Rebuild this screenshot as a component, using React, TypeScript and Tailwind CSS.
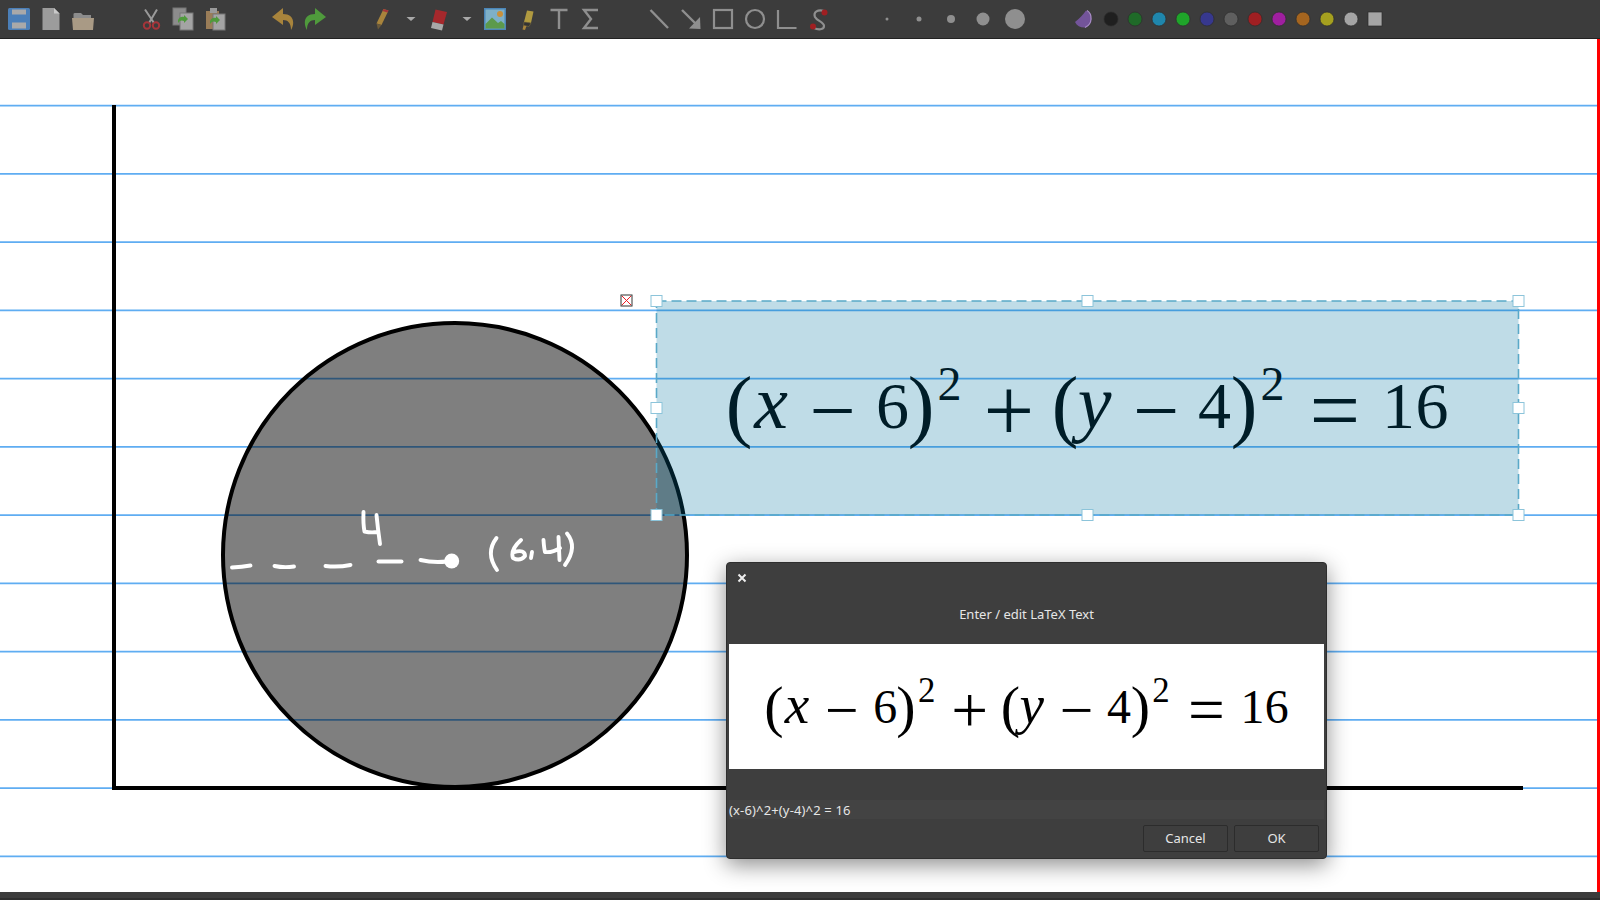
import type { ReactNode } from 'react'

const LINE_COUNT = 12
const lines = Array.from({ length: LINE_COUNT }, (_, i) => 105.7 + i * 68.25)

const COLORS = ['#1f1f1f', '#1f6a28', '#1f86ac', '#1fa52a', '#37388e', '#5f5f5f', '#a01f22', '#a01fa0', '#a5651f', '#a5a01f', '#a5a5a5']
const SIZES = [1.5, 2.5, 4, 6.5, 10]

// glyph centres in canvas coordinates; the dialog preview reuses them through its viewBox
const GLYPHS: { c: string; x: number; y: number; size: number; italic?: boolean }[] = [
  { c: '(', x: 739, y: 432, size: 80 },
  { c: 'x', x: 771, y: 428, size: 76, italic: true },
  { c: '−', x: 832.5, y: 438, size: 82 },
  { c: '6', x: 892.5, y: 428, size: 66 },
  { c: ')', x: 921, y: 432, size: 80 },
  { c: '2', x: 949.5, y: 400, size: 48 },
  { c: '+', x: 1009, y: 441, size: 90 },
  { c: '(', x: 1065, y: 432, size: 80 },
  { c: 'y', x: 1094.5, y: 428, size: 76, italic: true },
  { c: '−', x: 1156, y: 438, size: 82 },
  { c: '4', x: 1214.5, y: 428, size: 66 },
  { c: ')', x: 1244, y: 432, size: 80 },
  { c: '2', x: 1272.5, y: 400, size: 48 },
  { c: '=', x: 1335, y: 441, size: 90 },
  { c: '1', x: 1398.5, y: 428, size: 66 },
  { c: '6', x: 1432, y: 428, size: 66 },
]

function Formula() {
  return (
    <g className="font-['Liberation_Serif',serif]" fill="#000" textAnchor="middle">
      {GLYPHS.map((g, i) => (
        <text key={i} x={g.x} y={g.y} fontSize={g.size} fontStyle={g.italic ? 'italic' : 'normal'}>{g.c}</text>
      ))}
    </g>
  )
}

function Tool({ children, narrow }: { children: ReactNode; narrow?: boolean }) {
  return (
    <div className={`flex h-[38px] items-center justify-center ${narrow ? 'w-6' : 'w-8'}`}>
      <svg width="24" height="24" viewBox="0 0 24 24">{children}</svg>
    </div>
  )
}

const Drop = () => <Tool narrow><path d="M7.5 10 H16.5 L12 14 Z" fill="#a9a9a9" /></Tool>
const G = '#8f8f8f'

function GreenArrow({ x = 0, y = 0 }: { x?: number; y?: number }) {
  return <path transform={`translate(${x} ${y})`} d="M0 4 C1 1 4 0 6 1 V-1 L10 3 L6 7 V5 C4 4 2 4 0 7 Z" fill="#4f9a3c" />
}

function Toolbar() {
  return (
    <div className="flex h-[39px] gap-9 border-b border-[#222222] bg-[#3c3c3c] pl-[3px]">
      <div className="flex">
        <Tool>
          <path d="M1 2.5 Q1 1 2.5 1 H21.5 Q23 1 23 2.5 V21.5 Q23 23 21.5 23 H2.5 Q1 23 1 21.5 Z" fill="#4b7fb8" />
          <rect x="5" y="2.5" width="14" height="5" fill="#a9a9a9" />
          <rect x="5" y="15.5" width="14" height="6" fill="#a9a9a9" />
        </Tool>
        <Tool>
          <path d="M3.5 1 H15 L20.5 6.5 V23 H3.5 Z" fill="#9c9c9c" />
          <path d="M15 1 L20.5 6.5 H15 Z" fill="#c9c9c9" />
        </Tool>
        <Tool>
          <path d="M2.5 7 Q2.5 6 4 6 H10 L12 8 H20 V12 H2.5 Z" fill="#8c8c8c" />
          <path d="M1 11 H23 L22 23 H2 Z" fill="#a99a85" />
        </Tool>
      </div>
      <div className="flex">
        <Tool>
          <path d="M6 2.5 L15 16 M18 2.5 L10 16" stroke="#9a9a9a" strokeWidth="2" fill="none" />
          <circle cx="8" cy="18.5" r="3.2" fill="none" stroke="#a5353a" strokeWidth="2" />
          <circle cx="17" cy="18.5" r="3.2" fill="none" stroke="#a5353a" strokeWidth="2" />
        </Tool>
        <Tool>
          <rect x="2" y="1" width="13" height="17" fill="#8c8c8c" stroke="#777777" />
          <rect x="9" y="6" width="13" height="17" fill="#a4a4a4" stroke="#777777" />
          <GreenArrow x={7} y={9} />
        </Tool>
        <Tool>
          <rect x="3" y="4" width="13" height="18" fill="#9a7d58" />
          <rect x="7" y="1" width="7" height="5" fill="#9a9a9a" />
          <rect x="10" y="7" width="12" height="16" fill="#a4a4a4" stroke="#777777" />
          <GreenArrow x={7} y={10} />
        </Tool>
      </div>
      <div className="flex">
        <Tool><path d="M12 1 L1 10 L12 18 V13 C17 13 20 16 20 23 C25 14 21 7 12 7 Z" fill="#a8843c" /></Tool>
        <Tool><path d="M12 1 L23 10 L12 18 V13 C7 13 4 16 4 23 C-1 14 3 7 12 7 Z" fill="#4f9a3c" /></Tool>
      </div>
      <div className="flex">
        <Tool>
          <path d="M12.5 2 L17.5 3.5 L10.5 18 L5.5 16.5 Z" fill="#a8843c" />
          <path d="M12.5 2 L17.5 3.5 L16.5 5.5 L11.5 4 Z" fill="#a5353a" />
          <path d="M5.5 16.5 L10.5 18 L7 22.5 Z" fill="#6b5a3a" />
        </Tool>
        <Drop />
        <Tool>
          <path d="M8.5 2.5 L20 5 L16.5 17.5 L5.5 15 Z" fill="#a5282c" />
          <path d="M5.5 15 L16.5 17.5 L15 23.5 L4 21 Z" fill="#a8a8a8" />
        </Tool>
        <Drop />
        <Tool>
          <rect x="1" y="1" width="22" height="22" fill="#4b86b8" />
          <rect x="2.5" y="2.5" width="19" height="19" fill="#7eb0c8" />
          <circle cx="17" cy="7" r="3" fill="#c8903c" />
          <path d="M2.5 17 L9 10.5 L15 16 L18 14 L21.5 17 V21.5 H2.5 Z" fill="#5c9a4c" />
        </Tool>
        <Tool>
          <path d="M12 3.5 L18.5 4.5 L16 16 L9 15 Z" fill="#b09a40" />
          <path d="M9 15 L16 16 L14 19.5 L8.5 18.5 Z" fill="#333333" stroke="#7a6a3a" strokeWidth=".6" />
          <path d="M8.5 18.5 L11.5 19 L10 23 L7.5 22.5 Z" fill="#a8843c" />
        </Tool>
        <Tool><path d="M3.5 3 H20.5 M12 3 V22" stroke={G} strokeWidth="2.4" fill="none" /></Tool>
        <Tool><path d="M19 3 H5 L12 12 L5 21 H19" stroke={G} strokeWidth="2.4" fill="none" /></Tool>
      </div>
      <div className="flex">
        <Tool><path d="M3.5 3 L21 21" stroke={G} strokeWidth="2.4" /></Tool>
        <Tool><path d="M3 3 L17 17" stroke={G} strokeWidth="2.4" /><path d="M10 21.5 L21.5 22 L21 10 Z" fill={G} /></Tool>
        <Tool><rect x="3" y="3" width="18" height="18" fill="none" stroke={G} strokeWidth="2.2" /></Tool>
        <Tool><circle cx="12" cy="12" r="9" fill="none" stroke={G} strokeWidth="2.2" /></Tool>
        <Tool><path d="M3 3 V21 H21.5" fill="none" stroke={G} strokeWidth="2.2" /></Tool>
        <Tool>
          <path d="M17 4 C11 2 6 5 8 10 C10 14 17 15 17 19 C17 23 11 23 7 21" fill="none" stroke={G} strokeWidth="2.2" />
          <circle cx="17.5" cy="5.5" r="3" fill="#a01f22" />
          <circle cx="6" cy="19.5" r="3" fill="#a01f22" />
        </Tool>
      </div>
      <div className="flex">
        {SIZES.map(r => (
          <Tool key={r}><circle cx="12" cy="12" r={r} fill={G} /></Tool>
        ))}
      </div>
      <div className="flex">
        <Tool>
          <path d="M15 3.5 C22 8 22 16 15 20.5 C10 21 6 19 4 15 C8 12 12 8 15 3.5 Z" fill="#73549a" />
          <path d="M16 3.5 C21.5 7 22 17 14 20.5" fill="none" stroke="#a98cc8" strokeWidth="1.2" />
        </Tool>
        {COLORS.map(c => (
          <Tool key={c} narrow>
            <circle cx="12" cy="12" r="7" fill={c} stroke="#2c2c2c" strokeWidth=".7" />
          </Tool>
        ))}
        <Tool narrow><rect x="5" y="5" width="14" height="14" fill="#a5a5a5" stroke="#2c2c2c" strokeWidth=".7" /></Tool>
      </div>
    </div>
  )
}

const HANDLES: [number, number][] = [
  [656.5, 301], [1087.5, 301], [1518.5, 301],
  [656.5, 408], [1518.5, 408],
  [656.5, 515], [1087.5, 515], [1518.5, 515],
]

function Canvas() {
  return (
    <svg className="block h-full w-full" viewBox="0 39 1597 853">
      {lines.map(y => (
        <line key={y} x1="0" x2="1597" y1={y} y2={y} stroke="#5fadf2" strokeWidth="1.8" />
      ))}
      <Formula />
      <circle cx="455" cy="555" r="232" fill="rgba(0,0,0,.5)" stroke="#000" strokeWidth="4" />
      <path d="M114 105 V788 M112 788 H1523" stroke="#000" strokeWidth="4" fill="none" />
      {/* handwriting */}
      <g fill="none" stroke="#fff" strokeWidth="3.9" strokeLinecap="round" strokeLinejoin="round">
        <path d="M232 567.5 Q242 567 250.5 565.5" />
        <path d="M274.5 566 Q284 568 294 566.5" />
        <path d="M325.5 566 Q338 567.5 350.5 565" />
        <path d="M378.5 561.5 H401.5" />
        <path d="M420.5 560 Q433 563 447 561.5" />
        <path d="M363.5 512 Q363 524 364.5 531.5 Q371 533 377 532 M376.5 515 Q378 530 380 544" />
        <path d="M496.5 538 Q485 553 497 570" />
        <path d="M521 540 Q510 550 513 558 Q520 562 525 556 Q525 549 514 552" />
        <path d="M532 552 L531 558" />
        <path d="M543.5 540 Q544 548 545 552 Q552 553 560 548 M558.5 537 L559.5 560" />
        <path d="M567 533.5 Q578 547 565 565" />
      </g>
      <circle cx="451.7" cy="561" r="7.5" fill="#fff" />
      {/* selection */}
      <rect x="656.5" y="301" width="862" height="214" fill="rgba(0,116,160,.25)" stroke="#5aa9c8" strokeWidth="1.6" strokeDasharray="10 5" />
      {HANDLES.map(([x, y]) => (
        <rect key={`${x}-${y}`} x={x - 5.5} y={y - 5.5} width="11" height="11" fill="#fff" stroke="#8cc4da" strokeWidth="1" />
      ))}
      <rect x="621" y="295" width="11" height="11" fill="#fff" stroke="#333333" />
      <path d="M622 296 L631 305 M631 296 L622 305" stroke="#ee1c25" strokeWidth="1" />
    </svg>
  )
}

function LatexDialog() {
  return (
    <div className="absolute left-[726px] top-[523px] flex h-[297px] w-[601px] flex-col rounded-[4px] border border-[#2e2e2e] bg-[#3e3e3e] font-['Noto_Sans',sans-serif] text-[13px] text-[#e6e6e6] shadow-[0_6px_22px_rgba(0,0,0,.45)]">
      <div className="h-[81px] shrink-0 px-[10px] pt-[10px]">
        <svg className="block" width="10" height="10" viewBox="0 0 10 10">
          <path d="M1.5 1.5 L8.5 8.5 M8.5 1.5 L1.5 8.5" stroke="#eeeeee" strokeWidth="2" />
        </svg>
        <p className="mt-[22px] text-center leading-[18px]">Enter / edit LaTeX Text</p>
      </div>
      <div className="mx-[2px] h-[125px] shrink-0 bg-white">
        <svg className="block h-full w-full" viewBox="677.3 319.6 819.6 172.2">
          <Formula />
        </svg>
      </div>
      <div className="mx-[2px] mt-[31px] h-[19px] shrink-0 bg-[#434343] leading-[21px] tracking-[0.15px]">(x-6)^2+(y-4)^2 = 16</div>
      <div className="mr-[7px] mt-[6px] flex justify-end gap-[6px]">
        <button className="h-[27px] w-[85px] rounded-[2px] border border-[#2c2c2c] bg-[#3e3e3e]">Cancel</button>
        <button className="h-[27px] w-[85px] rounded-[2px] border border-[#2c2c2c] bg-[#3e3e3e]">OK</button>
      </div>
    </div>
  )
}

export default function App() {
  return (
    <div className="flex h-screen w-full flex-col overflow-hidden bg-white">
      <Toolbar />
      <div className="relative min-h-0 flex-1 border-r-[3px] border-[#ff0000]">
        <Canvas />
        <LatexDialog />
      </div>
      <div className="h-2 shrink-0 border-b-2 border-[#2e2e2e] bg-[#3c3c3c]" />
    </div>
  )
}
